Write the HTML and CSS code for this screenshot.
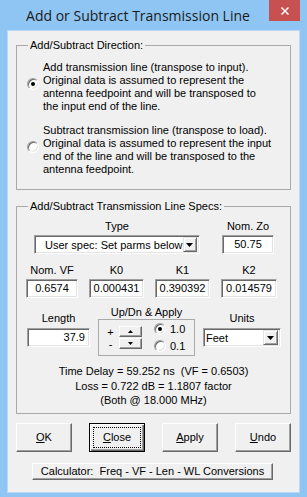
FILE: index.html
```html
<!DOCTYPE html>
<html lang="en">
  <head>
    <meta charset="UTF-8" />
    <meta name="viewport" content="width=device-width, initial-scale=1.0" />
    <title>Add or Subtract Transmission Line</title>
    <link rel="stylesheet" href="styles.css">
  </head>
  <body>
    <div class="window">
      <div class="titlebar">
        <span class="title">Add or Subtract Transmission Line</span>
        <span class="close-btn">
          <svg width="8" height="8" viewBox="0 0 8 8">
            <path d="M0.5 0.5 L7.5 7.5 M7.5 0.5 L0.5 7.5" stroke="#fff" stroke-width="1.5" fill="none" />
          </svg>
        </span>
      </div>

      <div class="client">
        <!-- Direction group -->
        <fieldset class="group direction">
          <legend>Add/Subtract Direction:</legend>
          <div class="option">
            <span class="radio checked"></span>
            <span class="option-text">Add transmission line (transpose to input).<br>Original data is assumed to represent the<br>antenna feedpoint and will be transposed to<br>the input end of the line.</span>
          </div>
          <div class="option second">
            <span class="radio"></span>
            <span class="option-text">Subtract transmission line (transpose to load).<br>Original data is assumed to represent the input<br>end of the line and will be transposed to the<br>antenna feedpoint.</span>
          </div>
        </fieldset>

        <!-- Specs group -->
        <fieldset class="group specs">
          <legend>Add/Subtract Transmission Line Specs:</legend>

          <div class="row row-type">
            <div class="field type-field">
              <span class="lbl">Type</span>
              <div class="combo type-combo">
                <span class="combo-text">User spec: Set parms below</span>
                <span class="drop-btn">
                  <svg width="7" height="4" viewBox="0 0 7 4"><path d="M0 0 H7 L3.5 4 Z" fill="#000" /></svg>
                </span>
              </div>
            </div>
            <div class="field zo-field">
              <span class="lbl">Nom. Zo</span>
              <div class="textbox">50.75</div>
            </div>
          </div>

          <div class="row row-k">
            <div class="field w52">
              <span class="lbl">Nom. VF</span>
              <div class="textbox">0.6574</div>
            </div>
            <div class="field w55">
              <span class="lbl">K0</span>
              <div class="textbox">0.000431</div>
            </div>
            <div class="field w55">
              <span class="lbl">K1</span>
              <div class="textbox">0.390392</div>
            </div>
            <div class="field w56">
              <span class="lbl">K2</span>
              <div class="textbox">0.014579</div>
            </div>
          </div>

          <div class="row row-len">
            <div class="field len-field">
              <span class="lbl">Length</span>
              <div class="textbox right">37.9</div>
            </div>
            <div class="field updn-field">
              <span class="lbl tight">Up/Dn &amp; Apply</span>
              <div class="updn-box">
                <div class="signs"><span>+</span><span>-</span></div>
                <div class="spinner">
                  <span class="spin-btn"><svg width="5" height="3" viewBox="0 0 5 3"><path d="M0 3 H5 L2.5 0 Z" fill="#000" /></svg></span>
                  <span class="spin-btn"><svg width="5" height="3" viewBox="0 0 5 3"><path d="M0 0 H5 L2.5 3 Z" fill="#000" /></svg></span>
                </div>
                <div class="steps">
                  <div class="step"><span class="radio checked"></span>1.0</div>
                  <div class="step"><span class="radio"></span>0.1</div>
                </div>
              </div>
            </div>
            <div class="field units-field">
              <span class="lbl">Units</span>
              <div class="combo units-combo">
                <span class="combo-text">Feet</span>
                <span class="drop-btn">
                  <svg width="7" height="4" viewBox="0 0 7 4"><path d="M0 0 H7 L3.5 4 Z" fill="#000" /></svg>
                </span>
              </div>
            </div>
          </div>

          <div class="results">
            <div>Time Delay = 59.252 ns&nbsp; (VF = 0.6503)</div>
            <div>Loss = 0.722 dB = 1.1807 factor</div>
            <div>(Both @ 18.000 MHz)</div>
          </div>
        </fieldset>

        <div class="buttons">
          <button class="btn"><u>O</u>K</button>
          <button class="btn default"><u>C</u>lose</button>
          <button class="btn"><u>A</u>pply</button>
          <button class="btn"><u>U</u>ndo</button>
        </div>

        <div class="calc-row">
          <button class="btn calc">Calculator:&nbsp; Freq - VF - Len - WL Conversions</button>
        </div>
      </div>
    </div>
  </body>
</html>
```

FILE: styles.css
```css
body {
  margin: 0;
  font-family: "Liberation Sans", Arial, sans-serif;
  font-size: 11px;
  color: #000;
  background-color: #8ec5f3;
}

.window {
  display: flex;
  flex-direction: column;
  width: 307px;
  height: 497px;
}

.titlebar {
  display: flex;
  height: 30px;
  flex-shrink: 0;
}

.title {
  flex: 1;
  padding-left: 7px;
  text-align: center;
  line-height: 31px;
  font-family: "Open Sans", "Liberation Sans", sans-serif;
  font-size: 14px;
  color: #1b1b1b;
}

.close-btn {
  width: 31px;
  height: 21px;
  margin-right: 7px;
  background-color: #c75050;
  display: flex;
  align-items: center;
  justify-content: center;
}

.client {
  flex: 1;
  margin: 0 7px 4px;
  padding: 0 8px;
  border: 1px solid #b7d9f7;
  background-color: #f0f0f0;
}

/* group boxes */
.group {
  margin: 7px 0 0;
  padding: 0;
  min-width: 0;
  border: 1px solid #a9a9a9;
}

.group legend {
  margin-left: 11px;
  padding: 0 2px;
  line-height: 15px;
}

.group.specs {
  margin-top: 9px;
}

/* direction options */
.direction {
  padding: 8px 0 13px 0;
}

.option {
  display: flex;
  align-items: center;
  padding-left: 10px;
}

.option.second {
  margin-top: 11px;
}

.option .radio {
  margin: 0 4px 6px 0;
}

.option-text {
  line-height: 13px;
  white-space: nowrap;
}

.radio {
  position: relative;
  display: inline-block;
  flex-shrink: 0;
  width: 12px;
  height: 12px;
  box-sizing: border-box;
  border-radius: 50%;
  border: 1px solid;
  border-color: #a0a0a0 #fff #fff #a0a0a0;
  background-color: #fff;
  box-shadow: inset 1px 1px #696969, inset -1px -1px #e3e3e3;
}

.radio.checked::after {
  content: "";
  position: absolute;
  left: 3px;
  top: 3px;
  width: 4px;
  height: 4px;
  border-radius: 50%;
  background-color: #000;
}

/* specs rows */
.row {
  display: flex;
  align-items: flex-start;
}

.field {
  display: flex;
  flex-direction: column;
  align-items: center;
}

.lbl {
  line-height: 13px;
  margin-bottom: 2px;
  white-space: nowrap;
}

.lbl.tight {
  margin-bottom: 0;
}

.textbox {
  align-self: stretch;
  height: 19px;
  box-sizing: border-box;
  border: 1px solid;
  border-color: #a0a0a0 #fff #fff #a0a0a0;
  box-shadow: inset 1px 1px #696969, inset -1px -1px #e3e3e3;
  background-color: #fff;
  line-height: 17px;
  text-align: center;
  white-space: nowrap;
}

.textbox.right {
  text-align: right;
  padding-right: 4px;
}

.combo {
  align-self: stretch;
  display: flex;
  align-items: center;
  height: 19px;
  box-sizing: border-box;
  padding: 0 2px 0 0;
  border: 1px solid;
  border-color: #a0a0a0 #fff #fff #a0a0a0;
  box-shadow: inset 1px 1px #696969, inset -1px -1px #e3e3e3;
  background-color: #fff;
}

.combo-text {
  flex: 1;
  white-space: nowrap;
}

.drop-btn {
  width: 15px;
  height: 15px;
  box-sizing: border-box;
  display: flex;
  align-items: center;
  justify-content: center;
  background-color: #f0f0f0;
  border: 1px solid;
  border-color: #e3e3e3 #696969 #696969 #e3e3e3;
  box-shadow: inset 1px 1px #fff, inset -1px -1px #a0a0a0;
}

.row-type {
  margin-top: 6px;
  padding-left: 17px;
}

.type-field {
  width: 166px;
}

.type-combo .combo-text {
  padding-left: 10px;
}

.zo-field {
  width: 52px;
  margin-left: 22px;
}

.row-k {
  margin-top: 10px;
  padding-left: 9px;
  gap: 11px;
}

.w52 { width: 52px; }
.w55 { width: 55px; }
.w56 { width: 56px; }

.row-len {
  margin-top: 8px;
  padding-left: 10px;
}

.len-field {
  width: 63px;
  margin-top: 6px;
}

.len-field .lbl,
.units-field .lbl {
  margin-bottom: 3px;
}

.updn-field {
  width: 97px;
  margin-left: 8px;
}

.units-field {
  width: 78px;
  margin-left: 8px;
  margin-top: 6px;
}

.units-combo .combo-text {
  padding-left: 2px;
}

.updn-box {
  align-self: stretch;
  display: flex;
  align-items: center;
  height: 37px;
  box-sizing: border-box;
  padding-left: 8px;
  border: 1px solid #a9a9a9;
}

.signs {
  display: flex;
  flex-direction: column;
  align-items: center;
  width: 7px;
  line-height: 12px;
}

.spinner {
  display: flex;
  flex-direction: column;
  gap: 1px;
  margin-left: 5px;
}

.spin-btn {
  width: 23px;
  height: 11px;
  box-sizing: border-box;
  display: flex;
  align-items: center;
  justify-content: center;
  background-color: #f0f0f0;
  border: 1px solid;
  border-color: #fff #696969 #696969 #fff;
  box-shadow: inset -1px -1px #a0a0a0;
}

.steps {
  margin-left: 12px;
}

.step {
  display: flex;
  align-items: center;
  gap: 4px;
  height: 17px;
}

.results {
  margin-top: 8px;
  padding-bottom: 5px;
  text-align: center;
  line-height: 14.5px;
}

/* buttons */
.buttons {
  display: flex;
  justify-content: space-between;
  margin-top: 9px;
}

.btn {
  position: relative;
  width: 56px;
  height: 29px;
  padding: 0;
  font-family: inherit;
  font-size: 11px;
  color: #000;
  background-color: #f0f0f0;
  border: 1px solid;
  border-color: #fff #696969 #696969 #fff;
  box-shadow: inset -1px -1px #a0a0a0;
}

.btn.default {
  border: 1px solid #000;
  box-shadow: inset 1px 1px #fff, inset -1px -1px #696969, inset -2px -2px #a0a0a0;
}

.btn.default::after {
  content: "";
  position: absolute;
  left: 3px;
  top: 3px;
  right: 3px;
  bottom: 3px;
  border: 1px dotted #000;
}

.calc-row {
  margin-top: 11px;
  padding-left: 16px;
}

.btn.calc {
  width: 241px;
  height: 17px;
  line-height: 13px;
}
```
